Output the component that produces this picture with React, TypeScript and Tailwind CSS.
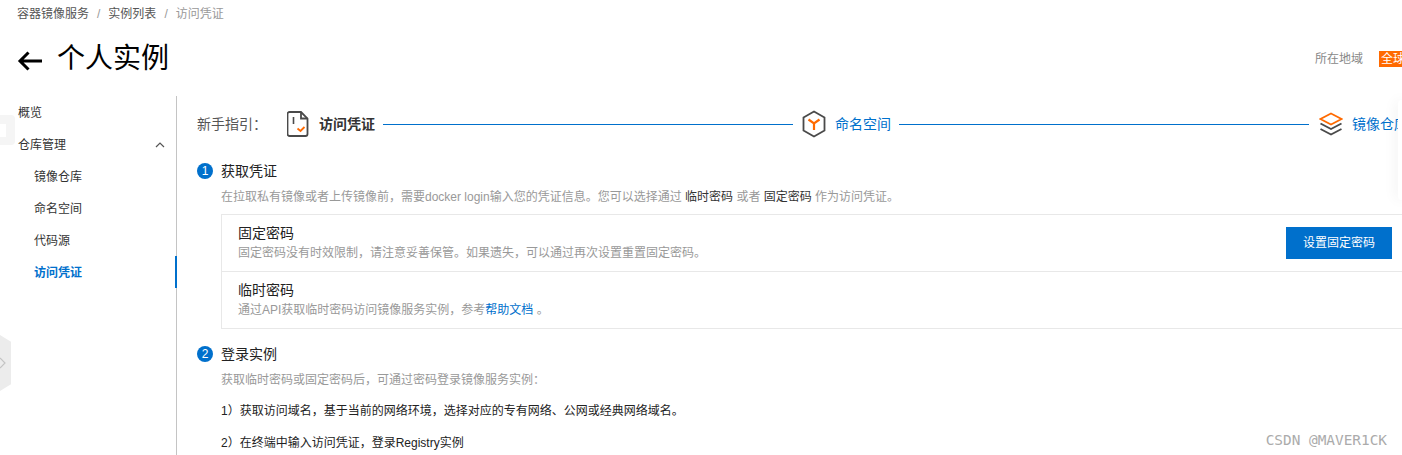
const font = { fontFamily: '"Liberation Sans", "Noto Sans CJK SC", sans-serif' };

function NavItem({ label, active, sub }: { label: string; active?: boolean; sub?: boolean }) {
  return (
    <div className={`relative flex h-8 items-center text-xs ${sub ? 'pl-[34px]' : 'pl-[18px]'} ${active ? 'font-bold text-[#0070cc]' : 'text-[#333]'}`}>
      {label}
      {active && <div className="absolute top-[-1px] right-[-1px] h-8 w-0.5 bg-[#0070cc]" />}
    </div>
  );
}

function StepNumber({ n }: { n: number }) {
  return (
    <div className="flex h-4 w-4 shrink-0 items-center justify-center rounded-full bg-[#0070cc] text-xs leading-none text-white">
      {n}
    </div>
  );
}

function FileIcon() {
  return (
    <svg width="22" height="26" viewBox="0 0 22 26" fill="none" className="shrink-0">
      <path d="M2.500 1h11.500l6.500 6.500v15.500a2 2 0 0 1-2 2h-16a2 2 0 0 1-2-2v-20a2 2 0 0 1 2-2z" stroke="#4a4a4a" strokeWidth="1.800" />
      <path d="M14 1v6.500h6.500" stroke="#4a4a4a" strokeWidth="1.800" />
      <path d="M6.500 6v7" stroke="#4a4a4a" strokeWidth="1.600" />
      <path d="M10.500 17.500l3 2.500 4-4" stroke="#ff6a00" strokeWidth="1.800" />
    </svg>
  );
}

function HexIcon() {
  return (
    <svg width="24" height="28" viewBox="0 0 24 28" fill="none" className="shrink-0">
      <path d="M12 1.500l10.500 6v13l-10.500 6-10.500-6v-13z" stroke="#4a4a4a" strokeWidth="1.800" />
      <path d="M6.500 9.500l5.500 4 5.500-4M12 13.500v6.500" stroke="#ff6a00" strokeWidth="2.200" />
    </svg>
  );
}

function LayersIcon() {
  return (
    <svg width="24" height="25" viewBox="0 0 24 25" fill="none" className="shrink-0">
      <path d="M12 1.500l10.500 5.500-10.500 5.500-10.500-5.500z" stroke="#ff6a00" strokeWidth="1.700" />
      <path d="M1.500 11.500l10.500 5.500 10.500-5.500" stroke="#4a4a4a" strokeWidth="1.900" />
      <path d="M1.500 17l10.500 5.500 10.500-5.500" stroke="#4a4a4a" strokeWidth="1.900" />
    </svg>
  );
}

export default function App() {
  return (
    <div className="relative h-[455px] w-[1402px] overflow-hidden bg-white" style={font}>
      {/* breadcrumb */}
      <div className="flex h-7 items-center gap-2 pl-[17px] text-xs text-[#555]">
        <span>容器镜像服务</span>
        <span className="text-[#999]">/</span>
        <span>实例列表</span>
        <span className="text-[#999]">/</span>
        <span className="text-[#999]">访问凭证</span>
      </div>

      {/* title row */}
      <div className="flex h-[68px] items-center pb-1.5 pl-[17px]">
        <svg width="26" height="22" viewBox="0 0 26 22" fill="none" className="mr-[14px] mt-1 shrink-0">
          <path d="M25 11H3M11.500 2.500L3 11l8.500 8.500" stroke="#000" strokeWidth="3" />
        </svg>
        <h1 className="text-[28px] leading-none text-black">个人实例</h1>
        <div className="ml-auto flex w-[87px] items-center gap-4 whitespace-nowrap text-xs text-[#888]">
          <span>所在地域</span>
          <span className="bg-[#ff6a00] px-0.5 text-white">全球</span>
        </div>
      </div>

      <div className="flex">
        {/* sidebar */}
        <div className="h-[359px] w-[177px] shrink-0 border-r border-[#c4c4c4] pt-px">
          <NavItem label="概览" />
          <div className="relative">
            <NavItem label="仓库管理" />
            <svg width="10" height="6" viewBox="0 0 10 6" fill="none" className="absolute top-[13px] right-[11px]">
              <path d="M1 5l4-4 4 4" stroke="#555" strokeWidth="1.200" />
            </svg>
          </div>
          <NavItem sub label="镜像仓库" />
          <NavItem sub label="命名空间" />
          <NavItem sub label="代码源" />
          <NavItem sub active label="访问凭证" />
        </div>

        {/* main */}
        <div className="min-w-0 flex-1 overflow-hidden pl-5">
          <div className="flex h-[56px] w-[1300px] items-center">
            <span className="w-[90px] shrink-0 text-sm text-[#555]">新手指引：</span>
            <FileIcon />
            <span className="ml-[10px] shrink-0 text-sm font-bold text-[#333]">访问凭证</span>
            <div className="ml-2 h-px w-[410px] shrink-0 bg-[#0070cc]" />
            <div className="ml-[9px]"><HexIcon /></div>
            <span className="ml-[9px] shrink-0 text-sm text-[#0070cc]">命名空间</span>
            <div className="ml-2 h-px w-[410px] shrink-0 bg-[#0070cc]" />
            <div className="ml-[10px]"><LayersIcon /></div>
            <span className="ml-[9px] shrink-0 text-sm text-[#0070cc]">镜像仓库</span>
          </div>

          <div className="mt-[7px] flex h-6 items-center gap-2">
            <StepNumber n={1} />
            <span className="text-sm text-[#222]">获取凭证</span>
          </div>
          <p className="ml-6 mt-1 h-[20px] whitespace-nowrap text-xs leading-5 text-[#999]">
            在拉取私有镜像或者上传镜像前，需要docker login输入您的凭证信息。您可以选择通过 <span className="text-[#333]">临时密码</span> 或者 <span className="text-[#333]">固定密码</span> 作为访问凭证。
          </p>

          <div className="ml-6 mt-[7px] w-[1300px] border border-[#e8e8e8]">
            <div className="flex h-[57px] items-center border-b border-[#e8e8e8] pl-4">
              <div>
                <div className="text-sm leading-4 text-[#222]">固定密码</div>
                <div className="mt-1 text-xs leading-4 text-[#999]">固定密码没有时效限制，请注意妥善保管。如果遗失，可以通过再次设置重置固定密码。</div>
              </div>
              <button className="ml-[580px] h-8 w-[106px] bg-[#0070cc] text-xs text-white">设置固定密码</button>
            </div>
            <div className="flex h-14 items-center pl-4">
              <div>
                <div className="text-sm leading-4 text-[#222]">临时密码</div>
                <div className="mt-1 text-xs leading-4 text-[#999]">通过API获取临时密码访问镜像服务实例，参考<span className="text-[#0070cc]">帮助文档</span> 。</div>
              </div>
            </div>
          </div>

          <div className="mt-[13px] flex h-6 items-center gap-2">
            <StepNumber n={2} />
            <span className="text-sm text-[#222]">登录实例</span>
          </div>
          <p className="ml-6 mt-1 text-xs leading-5 text-[#999]">获取临时密码或固定密码后，可通过密码登录镜像服务实例：</p>
          <p className="ml-6 mt-[11px] text-xs leading-5 text-[#222]">1）获取访问域名，基于当前的网络环境，选择对应的专有网络、公网或经典网络域名。</p>
          <p className="ml-6 mt-3 text-xs leading-5 text-[#222]">2）在终端中输入访问凭证，登录Registry实例</p>
        </div>
      </div>

      {/* floating bits */}
      <div className="absolute top-[115px] left-0 h-[30px] w-[15px] rounded-r bg-[#f5f5f5]">
        <div className="absolute top-[9px] left-0 h-[13px] w-[6px] bg-white" />
      </div>
      <div className="absolute top-[335px] left-0 flex h-[56px] w-[11px] items-center bg-[#ececec] [clip-path:polygon(0_0,100%_12%,100%_88%,0_100%)]">
        <svg width="7" height="12" viewBox="0 0 7 12" fill="none">
          <path d="M0 1l5 5-5 5" stroke="#c4c4c4" strokeWidth="1.200" />
        </svg>
      </div>
      <div className="absolute top-[100px] right-0 h-[100px] w-1 rounded-l bg-white shadow-[0_0_14px_rgba(0,0,0,0.12)]" />
      <div className="absolute right-[15px] bottom-[7px] font-['DejaVu_Sans_Mono',monospace] text-[14.4px] leading-4 text-[#ababab]">CSDN @MAVER1CK</div>
    </div>
  );
}
